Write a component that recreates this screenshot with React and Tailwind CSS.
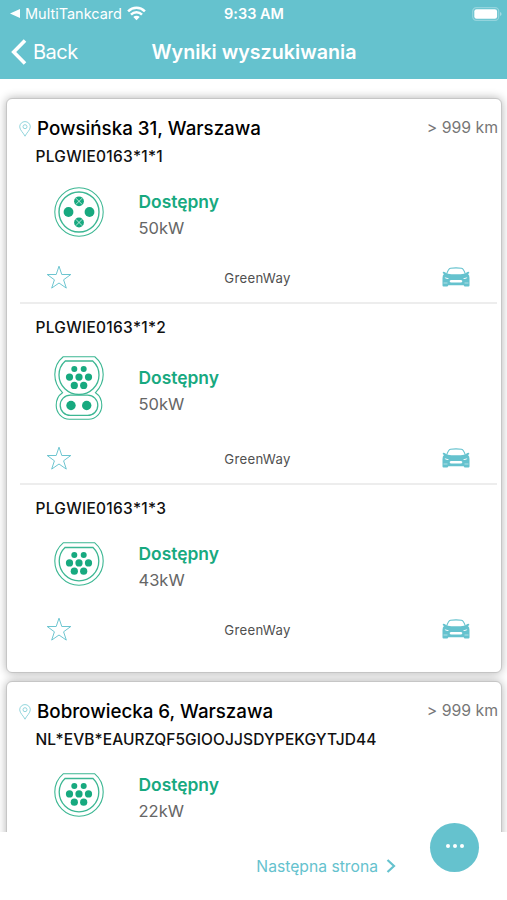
const stations = [
  {
    name: 'Powsińska 31, Warszawa',
    distance: '> 999 km',
    codeSpacing: 'tracking-[0.27px]',
    points: [
      { code: 'PLGWIE0163*1*1', power: '50kW', plug: 'chademo', operator: 'GreenWay' },
      { code: 'PLGWIE0163*1*2', power: '50kW', plug: 'ccs', operator: 'GreenWay' },
      { code: 'PLGWIE0163*1*3', power: '43kW', plug: 'type2', operator: 'GreenWay' },
    ],
  },
  {
    name: 'Bobrowiecka 6, Warszawa',
    distance: '> 999 km',
    codeSpacing: 'tracking-[0.1px]',
    points: [
      { code: 'NL*EVB*EAURZQF5GIOOJJSDYPEKGYTJD44', power: '22kW', plug: 'type2' },
    ],
  },
];

function Wifi() {
  return (
    <svg className="h-[15px] w-[19px]" viewBox="0 0 19 15" fill="none" stroke="white" strokeWidth="2.5">
      <path d="M1.1 5.3a12 12 0 0 1 16.8 0" />
      <path d="M4 8.6a7.8 7.8 0 0 1 11 0" />
      <path d="M9.5 14.200 6.300 11a4.500 4.500 0 0 1 6.400 0z" fill="white" stroke="none" />
    </svg>
  );
}

function Battery() {
  return (
    <svg className="h-[14px] w-[30px]" viewBox="0 0 30 14">
      <rect x="0.7" y="0.7" width="26" height="12.6" rx="3.6" fill="none" stroke="white" strokeOpacity="0.3" strokeWidth="1.2" />
      <rect x="2.3" y="2.3" width="22.8" height="9.4" rx="2.2" fill="white" />
      <path d="M28 5v4q1.6-.6 1.6-2T28 5z" fill="white" fillOpacity="0.4" />
    </svg>
  );
}

function Pin() {
  return (
    <svg className="h-[16px] w-[12px] shrink-0" viewBox="0 0 12 16" fill="none" stroke="#86d0d8" strokeWidth="0.9">
      <path d="M6 15.2C4.600 12 .7 9 .7 5.800a5.300 5.200 0 0 1 10.600 0C11.300 9 7.400 12 6 15.200z" />
      <circle cx="6" cy="5.700" r="2" />
    </svg>
  );
}

function Star() {
  return (
    <svg className="h-[24px] w-[26px]" viewBox="0 0 26 24" fill="none" stroke="#65c2ce" strokeWidth="0.95">
      <path d="M13 1.200l2.800 8.300h9l-7.200 5.300 2.700 8.300-7.300-5.100-7.300 5.100 2.700-8.300L1.200 9.500h9z" />
    </svg>
  );
}

function Car() {
  return (
    <svg className="h-[20px] w-[28px]" viewBox="0 0 28 20">
      <path d="M4.500 7.500C6 2.500 7 1.600 8.500 1.300 12 .7 16 .7 19.500 1.300 21 1.600 22 2.500 23.500 7.500" fill="none" stroke="#65c2ce" strokeWidth="1.100" />
      <path fill="#65c2ce" d="M.8 4.900q2-.7 3.700 1.600Q14 8.200 23.500 6.500q1.700-2.300 3.700-1.600.5 1.500-1.200 2.200Q27.500 8.300 27.500 11v7.500q0 1-1 1h-3.500q-1 0-1.300-1.200H6.300q-.3 1.200-1.300 1.200H1.500q-1 0-1-1V11q0-2.700 1.500-3.900Q.3 6.400.8 4.900z" />
      <path fill="white" d="M2.500 10.300l4 1q.6.600-.6.600-2.800 0-3.400-1.600zM25.500 10.300l-4 1q-.6.600.6.600 2.800 0 3.400-1.600zM9 13h10q1.600.2 1.300 1.500-.2 1-1.600 1H9.300q-1.400 0-1.600-1Q7.400 13.200 9 13z" />
      <path stroke="white" strokeWidth=".5" d="M1.500 16h4M22.500 16h4" />
    </svg>
  );
}

function SevenPins() {
  const pins = [[20.300, 13.500], [29.700, 13.500], [15.500, 21.500], [25, 21.500], [34.500, 21.500], [20.300, 29.800], [29.700, 29.800]];
  return (
    <g fill="#17a97f" stroke="none">
      {pins.map(([x, y]) => <circle key={`${x}-${y}`} cx={x} cy={y} r={y > 20 ? 3.600 : 3} />)}
    </g>
  );
}

function Plug({ type }) {
  if (type === 'chademo') {
    return (
      <svg className="h-[50px] w-[50px]" viewBox="0 0 50 50" fill="none" stroke="#3cb793" strokeWidth="1.050">
        <circle cx="25" cy="25" r="24.200" />
        <circle cx="25" cy="25" r="20" strokeWidth="1.400" />
        <g fill="#17a97f" stroke="none">
          <circle cx="14.500" cy="25" r="4.900" />
          <circle cx="35.500" cy="25" r="4.900" />
          <circle cx="25" cy="14.300" r="4.900" />
          <circle cx="25" cy="35.500" r="4.900" />
        </g>
        <path stroke="white" strokeOpacity="0.75" strokeWidth="0.9" d="M21.800 11.100l6.400 6.400M28.200 11.100l-6.400 6.400M21.800 32.300l6.400 6.400M28.200 32.300l-6.400 6.400" />
      </svg>
    );
  }
  if (type === 'ccs') {
    return (
      <svg className="h-[64px] w-[50px]" viewBox="0 0 50 64" fill="none" stroke="#3cb793" strokeWidth="1.100">
        <path d="M9.200.8h31.600C46 5 49.200 11.500 49.200 18.500 49.200 26 46 32 41.500 36.700 45 39 47.800 43 47.800 49.300 47.800 57 42 63.200 34.500 63.200h-19C8 63.200 2.200 57 2.200 49.300 2.200 43 5 39 8.500 36.700 4 32 .8 26 .8 18.500.8 11.500 4 5 9.200.8z" />
        <path strokeWidth="1.300" d="M11.300 5h27.400q6.300 5.500 6.300 14a20 19.500 0 0 1-40 0q0-8.500 6.300-14z" />
        <rect x="6.200" y="39.200" width="37.600" height="20.200" rx="10.100" strokeWidth="1.300" />
        <g transform="translate(0 -.4)"><SevenPins /></g>
        <g fill="#17a97f" stroke="none">
          <circle cx="17" cy="49.500" r="4.700" />
          <circle cx="32.700" cy="49.500" r="4.700" />
        </g>
      </svg>
    );
  }
  return (
    <svg className="h-[44px] w-[50px]" viewBox="0 0 50 44" fill="none" stroke="#3cb793" strokeWidth="1.100">
      <path d="M9.200.8h31.600q8.400 7 8.400 18.200a24.200 24.200 0 0 1-48.400 0Q.8 7.800 9.200.8z" />
      <path strokeWidth="1.300" d="M11 5.500h28q5.800 5.600 5.800 13.500a19.800 19.800 0 0 1-39.600 0q0-7.900 5.800-13.500z" />
      <g transform="translate(0 -.6)"><SevenPins /></g>
    </svg>
  );
}

function Point({ point, codeSpacing, last }) {
  return (
    <section>
      <h3 className={`h-5 pl-[28.500px] text-[15.500px] leading-5 font-medium whitespace-nowrap text-[#111] ${codeSpacing}`}>{point.code}</h3>
      <div className={`flex items-center pl-[47px] ${point.plug === 'ccs' ? 'h-[100px]' : 'h-[90px]'}`}>
        <div className="flex w-[50px] justify-center">
          <Plug type={point.plug} />
        </div>
        <div className="pt-[5px] pl-[34.500px]">
          <p className="h-[27px] text-[17.400px] leading-[27px] font-semibold text-[#17a97f]">Dostępny</p>
          <p className="h-[27px] text-[16.500px] leading-[27px] text-[#666]">{point.power}</p>
        </div>
      </div>
      {point.operator && (
        <div className="flex h-10 items-center justify-between pr-[31px] pl-[39px]">
          <Star />
          <span className="pt-[4px] pl-px text-[13.200px] tracking-[0.3px] text-[#505050]">{point.operator}</span>
          <Car />
        </div>
      )}
      {!last && <div className="mt-[5px] mr-[4px] mb-[14px] ml-[13px] h-[2px] bg-[#ededed]" />}
    </section>
  );
}

function Station({ station }) {
  return (
    <article className="h-[575px] shrink-0 rounded-[6px] border border-[#c6c6c6] bg-white shadow-[0_0_10px_rgba(0,0,0,0.3)]">
      <header className="flex h-[48px] items-center justify-between pt-[12px] pr-[3px] pl-[12px]">
        <div className="flex items-center gap-[6px]">
          <Pin />
          <h2 className="text-[18.750px] font-medium whitespace-nowrap text-black">{station.name}</h2>
        </div>
        <span className="pb-[3px] text-[15.800px] whitespace-nowrap text-[#777]">{station.distance}</span>
      </header>
      {station.points.map((point, i) => (
        <Point key={point.code} point={point} codeSpacing={station.codeSpacing} last={i === station.points.length - 1} />
      ))}
    </article>
  );
}

export default function App() {
  return (
    <div className="flex h-[900px] w-[507px] flex-col overflow-hidden bg-white font-['Inter','Liberation_Sans',sans-serif] [font-feature-settings:'calt'_0]">
      <header className="h-[79px] shrink-0 bg-[#65c2ce] text-white">
        <div className="grid h-[27px] grid-cols-3 items-center pr-[5px] pl-[10px] text-[14.500px]">
          <div className="flex items-center gap-[5px]">
            <svg className="h-[9px] w-[10px]" viewBox="0 0 10 9"><path fill="white" d="M0 4.500 10 0v9z" /></svg>
            <span className="pt-px whitespace-nowrap">MultiTankcard</span>
            <Wifi />
          </div>
          <span className="pt-px pr-[4px] text-center font-semibold">9:33 AM</span>
          <div className="flex justify-end"><Battery /></div>
        </div>
        <div className="grid h-[50px] grid-cols-[1fr_auto_1fr] items-center pr-[10px] pl-[11px]">
          <div className="flex items-center gap-[6px]">
            <svg className="h-[26px] w-[16px]" viewBox="0 0 16 26" fill="none" stroke="white" strokeWidth="3.600"><path d="M14 1.500 2.700 13 14 24.500" /></svg>
            <span className="text-[20px] tracking-[-0.5px]">Back</span>
          </div>
          <h1 className="pt-[2px] text-[19.700px] font-semibold whitespace-nowrap">Wyniki wyszukiwania</h1>
        </div>
      </header>
      <main className="flex h-[753px] shrink-0 flex-col gap-[8px] overflow-hidden pt-[19px] pr-[5px] pl-[6px]">
        {stations.map((station) => <Station key={station.name} station={station} />)}
      </main>
      <footer className="relative flex h-[68px] shrink-0 items-center justify-end pr-[111px] text-[#65c2ce]">
        <span className="pt-[2px] text-[15.700px] whitespace-nowrap">Następna strona</span>
        <svg className="ml-[8px] h-[14px] w-[10px]" viewBox="0 0 10 14" fill="none" stroke="#65c2ce" strokeWidth="2.200"><path d="M1.500 1 8 7l-6.500 6" /></svg>
        <button className="absolute top-[-9px] right-[28px] flex h-[49px] w-[49px] items-center justify-center gap-[3px] rounded-full bg-[#65c2ce] pb-[3px]">
          <i className="size-[4px] rounded-full bg-white" />
          <i className="size-[4px] rounded-full bg-white" />
          <i className="size-[4px] rounded-full bg-white" />
        </button>
      </footer>
    </div>
  );
}
